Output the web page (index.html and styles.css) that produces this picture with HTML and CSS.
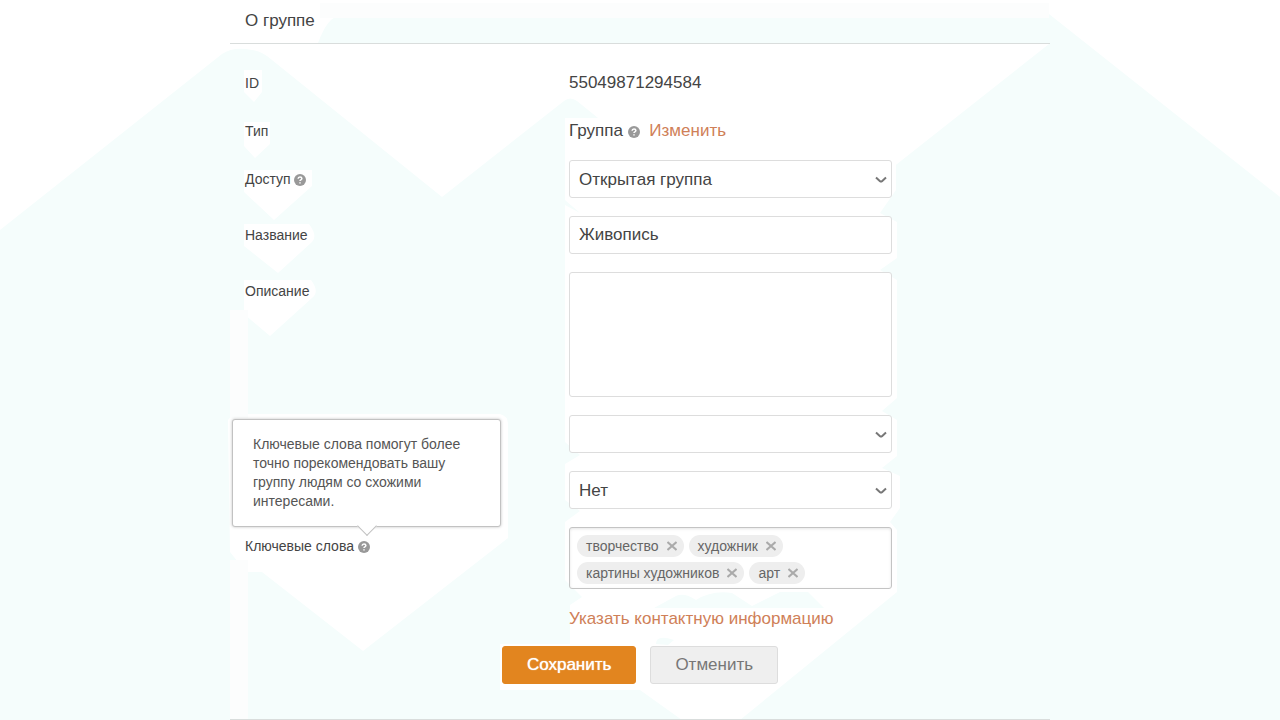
FILE: index.html
```html
<!DOCTYPE html>
<html lang="ru">
  <head>
    <meta charset="UTF-8" />
    <meta name="viewport" content="width=device-width, initial-scale=1.0" />
    <title>О группе</title>
    <link rel="stylesheet" href="styles.css">
  </head>
  <body>
    <svg class="backdrop" viewBox="0 0 1280 720" preserveAspectRatio="none" aria-hidden="true">
      <path class="tint" d="M0 230L222 54Q234 46 252 50Q262 51 272 60L442 197L564 101Q570 96 577 101L650 160H892V168L1049 44V14L1280 197V720H0Z" />
      <path class="tint" d="M318 43Q328 16 340 16L360 18H1049V43Z" />
      <path class="plain" d="M244 70H262V92L254 102L244 92ZM244 122H270V144L255 158L244 146ZM244 170H312V186L274 220L244 192ZM244 224H309Q318 236 312 242L278 273L244 246ZM244 280H311Q320 292 312 298L270 336L244 314Z" />
      <path class="plain" d="M228 420Q232 414 240 414H500Q508 416 508 424V538L363 651L262 572H246L230 552Z" />
      <path class="plain" d="M565 118H650V160H896V190L880 213L897 222V258L880 270L897 280V398L882 411L897 420V456L882 468L900 476V508L890 522L897 530V592L740 720H682L640 690H500V644H570V605L582 597L565 580V522L580 511L565 500V464L580 455L565 442V205L580 213L565 200Z" />
      <path class="tint" d="M654 608L676 596Q684 592 696 600Q712 590 732 593L752 606L780 592H808L824 608ZM656 644Q656 634 674 640L668 645Z" />
      <path class="edge" d="M320 3H1049V18H320ZM230 310H248V418H230ZM230 560H248V720H230Z" />
    </svg>

    <form class="panel">
      <h1 class="title">О группе</h1>

      <div class="fields">
        <div class="row row-static">
          <span class="label">ID</span>
          <span class="value">55049871294584</span>
        </div>

        <div class="row row-static">
          <span class="label">Тип</span>
          <div class="value">
            Группа
            <svg class="help" viewBox="0 0 12 12"><circle cx="6" cy="6" r="6" /><path d="M4.1 4.7Q4.2 2.9 6 2.9T7.9 4.5Q7.9 5.3 6.9 5.8Q6 6.3 6 7.1M6 8.3V9.6" /></svg>
            <a class="link link-edit" href="#">Изменить</a>
          </div>
        </div>

        <div class="row">
          <label class="label" for="access">
            Доступ
            <svg class="help" viewBox="0 0 12 12"><circle cx="6" cy="6" r="6" /><path d="M4.1 4.7Q4.2 2.9 6 2.9T7.9 4.5Q7.9 5.3 6.9 5.8Q6 6.3 6 7.1M6 8.3V9.6" /></svg>
          </label>
          <div class="select">
            <select class="control" id="access"><option>Открытая группа</option></select>
            <svg class="arrow" viewBox="0 0 12 8"><path d="M1 1.5L5 5.2Q6 5.9 7 5.2L11 1.5" /></svg>
          </div>
        </div>

        <div class="row">
          <label class="label" for="name">Название</label>
          <input class="control" type="text" id="name" value="Живопись" />
        </div>

        <div class="row">
          <label class="label" for="description">Описание</label>
          <textarea class="control control-area" id="description"></textarea>
        </div>

        <div class="row">
          <span class="label"></span>
          <div class="select">
            <select class="control" aria-label="Категория"><option></option></select>
            <svg class="arrow" viewBox="0 0 12 8"><path d="M1 1.5L5 5.2Q6 5.9 7 5.2L11 1.5" /></svg>
          </div>
        </div>

        <div class="row">
          <span class="label"></span>
          <div class="select">
            <select class="control" aria-label="Возрастное ограничение"><option>Нет</option></select>
            <svg class="arrow" viewBox="0 0 12 8"><path d="M1 1.5L5 5.2Q6 5.9 7 5.2L11 1.5" /></svg>
          </div>
        </div>

        <div class="row">
          <div class="label label-tip">
            <span id="keywords">Ключевые слова</span>
            <svg class="help" viewBox="0 0 12 12"><circle cx="6" cy="6" r="6" /><path d="M4.1 4.7Q4.2 2.9 6 2.9T7.9 4.5Q7.9 5.3 6.9 5.8Q6 6.3 6 7.1M6 8.3V9.6" /></svg>
            <div class="tooltip" role="tooltip">Ключевые слова помогут более точно порекомендовать вашу группу людям со схожими интересами.</div>
          </div>
          <div class="tags" role="group" aria-labelledby="keywords">
            <span class="tag">творчество <button class="remove" type="button" aria-label="Удалить"><svg viewBox="0 0 10 10"><path d="M0.5 1L9.5 9M9.5 1L0.5 9" /></svg></button></span>
            <span class="tag">художник <button class="remove" type="button" aria-label="Удалить"><svg viewBox="0 0 10 10"><path d="M0.5 1L9.5 9M9.5 1L0.5 9" /></svg></button></span>
            <span class="tag">картины художников <button class="remove" type="button" aria-label="Удалить"><svg viewBox="0 0 10 10"><path d="M0.5 1L9.5 9M9.5 1L0.5 9" /></svg></button></span>
            <span class="tag">арт <button class="remove" type="button" aria-label="Удалить"><svg viewBox="0 0 10 10"><path d="M0.5 1L9.5 9M9.5 1L0.5 9" /></svg></button></span>
          </div>
        </div>

        <div class="row">
          <span></span>
          <a class="link" href="#">Указать контактную информацию</a>
        </div>
      </div>

      <div class="actions">
        <button class="button button-save" type="submit">Сохранить</button>
        <button class="button" type="button">Отменить</button>
      </div>
    </form>
  </body>
</html>
```
FILE: styles.css
```css
* {
  box-sizing: border-box;
}
body {
  margin: 0;
  background-color: #fff;
  color: #444;
  font-family: "Liberation Sans", Arial, sans-serif;
  font-size: 17px;
}

/* background pattern */
.backdrop {
  position: absolute;
  top: 0;
  left: 0;
  z-index: -1;
  width: 100%;
  height: 100%;
}
.tint {
  fill: #f5fdfc;
}
.plain {
  fill: #fff;
}
.edge {
  fill: #fcfdfd;
}

.panel {
  max-width: 820px;
  margin: 0 auto;
  padding-bottom: 35px;
  border-bottom: 1px solid #d9dddc;
}
.title {
  margin: 0;
  padding: 0 15px 1px;
  border-bottom: 1px solid #d9dddc;
  font-size: 17px;
  font-weight: normal;
  line-height: 42px;
}
.fields {
  display: flex;
  flex-direction: column;
  gap: 18px;
  padding: 20px 15px 15px;
}
.row {
  display: grid;
  grid-template-columns: 324px minmax(0, 323px);
  align-items: start;
}
.row-static {
  padding-top: 8px;
}
.label {
  font-size: 14px;
  line-height: 38px;
}
.row-static .label,
.value {
  line-height: 22px;
}
.help {
  width: 12px;
  height: 12px;
  vertical-align: -2px;
  fill: #999;
}
.help path {
  fill: none;
  stroke: #fff;
  stroke-width: 1.5;
}
.link {
  color: #cf8058;
  line-height: 24px;
  text-decoration: none;
}
.link-edit {
  margin-left: 5px;
  line-height: 22px;
}

.control {
  display: block;
  width: 100%;
  height: 38px;
  margin: 0;
  padding: 0 9px;
  border: 1px solid #ddd;
  border-radius: 3px;
  background-color: #fff;
  color: #444;
  font: inherit;
  appearance: none;
}
.control-area {
  height: 125px;
  padding: 9px;
  resize: none;
}
.select {
  position: relative;
}
.arrow {
  position: absolute;
  top: 16px;
  right: 5px;
  width: 12px;
  height: 8px;
  fill: none;
  stroke: #777;
  stroke-width: 2;
  pointer-events: none;
}

.tags {
  display: flex;
  flex-wrap: wrap;
  gap: 5px;
  padding: 7px 7px 4px;
  border: 1px solid #c4c4c4;
  border-radius: 3px;
  background-color: #fff;
  box-shadow: inset 0 1px 3px rgba(0, 0, 0, 0.1);
}
.tag {
  display: flex;
  align-items: center;
  gap: 7px;
  height: 22px;
  padding: 0 6px 0 9px;
  border-radius: 11px;
  background-color: #eee;
  color: #666;
  font-size: 14px;
}
.remove {
  display: flex;
  padding: 1px;
  border: 0;
  background: none;
  cursor: pointer;
}
.remove svg {
  width: 10px;
  height: 10px;
  stroke: #aaa;
  stroke-width: 2;
}

/* hint above the keywords label */
.label-tip {
  position: relative;
}
.tooltip {
  position: absolute;
  bottom: 100%;
  left: -13px;
  width: 269px;
  padding: 15px 20px;
  border: 1px solid #c2c2c2;
  border-radius: 3px;
  background-color: #fff;
  box-shadow: 0 0 3px rgba(0, 0, 0, 0.25);
  color: #555;
  font-size: 14px;
  line-height: 19px;
}
.tooltip::after {
  content: "";
  position: absolute;
  top: 100%;
  left: 127px;
  width: 13px;
  height: 13px;
  margin-top: -7px;
  border: solid #c2c2c2;
  border-width: 0 1px 1px 0;
  background-color: #fff;
  transform: rotate(45deg);
}

.actions {
  display: flex;
  justify-content: center;
  gap: 14px;
}
.button {
  height: 38px;
  padding: 0 24px;
  border: 1px solid #ddd;
  border-radius: 3px;
  background-color: #efefef;
  color: #777;
  font: inherit;
  cursor: pointer;
}
.button-save {
  border-color: #e2851f;
  background-color: #e2851f;
  color: #fff;
  text-shadow: 0 0 1px #fff;
}
```
